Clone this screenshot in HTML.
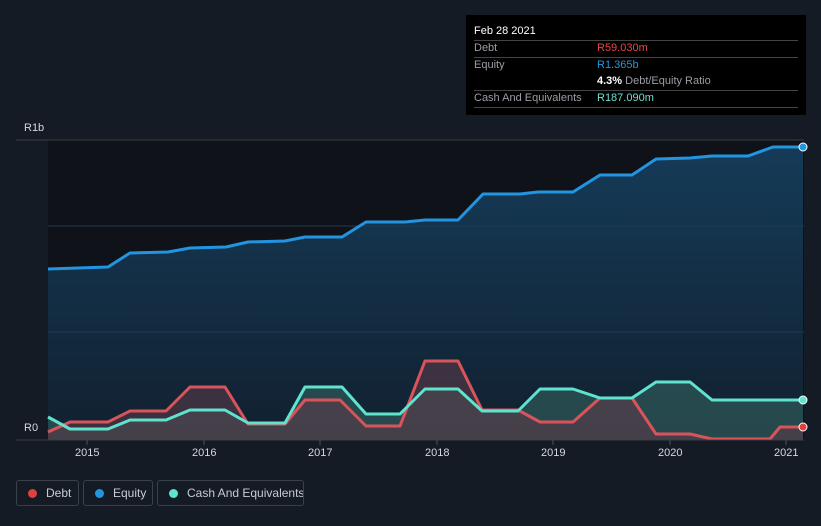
<!DOCTYPE html><html><head><style>
body{margin:0;width:821px;height:526px;background:#151b24;font-family:"Liberation Sans",sans-serif;overflow:hidden;position:relative}
.tt{position:absolute;left:466px;top:15px;width:340px;height:100px;background:#000;color:#fff;font-size:11px}
.tt .r{position:absolute;left:8px;right:8px;border-top:1px solid #444}
.lg{position:absolute;top:480px;height:26px;border:1px solid #3a404a;border-radius:3px;color:#c8ccd2;font-size:12px;line-height:24px;box-sizing:border-box;white-space:nowrap;overflow:hidden}
.lg i{display:inline-block;width:9px;height:9px;border-radius:50%;margin:0 9px 0 11px;vertical-align:-1px}
.ax{position:absolute;color:#d5d8dc;font-size:11px}
</style></head><body>
<svg width="821" height="526" style="position:absolute;left:0;top:0">
<defs>
<linearGradient id="eq" x1="0" y1="0" x2="0" y2="1"><stop offset="0" stop-color="#153b58"/><stop offset="1" stop-color="#11202f"/></linearGradient>
</defs>
<rect x="48" y="140" width="756" height="300" fill="#0f1319"/>
<line x1="16" y1="140" x2="804" y2="140" stroke="#3a3f46"/>
<polygon fill="url(#eq)" points="48,440 48,269 108,267 130,253 168,252 190,248 226,247 248,242 285,241 305,237 342,237 366,222 405,222 425,220 458,220 483,194 520,194 538,192 573,192 600,175 632,175 656,159 690,158 712,156 748,156 773,147 803,147 803,440"/>
<line x1="48" y1="226" x2="804" y2="226" stroke="#25384a"/>
<line x1="48" y1="332" x2="804" y2="332" stroke="#25384a"/>
<polygon fill="#2f5a5a" opacity="0.7" points="48,440 48,417 70,429 108,429 130,420 166,420 190,410 225,410 248,423 285,423 305,387 342,387 366,414 400,414 425,389 458,389 482,411 518,411 540,389 573,389 600,398 632,398 656,382 690,382 712,400 803,400 803,440"/>
<polygon fill="#5a3a48" opacity="0.6" points="48,440 48,432 70,422 108,422 130,411 166,411 190,387 225,387 248,424 285,424 305,400 340,400 366,426 400,426 425,361 458,361 482,410 518,410 540,422 573,422 600,398 632,398 656,434 690,434 712,439 770,439 780,427 803,427 803,440"/>
<polyline fill="none" stroke="#2394e0" stroke-width="3" stroke-linejoin="round" points="48,269 108,267 130,253 168,252 190,248 226,247 248,242 285,241 305,237 342,237 366,222 405,222 425,220 458,220 483,194 520,194 538,192 573,192 600,175 632,175 656,159 690,158 712,156 748,156 773,147 803,147"/>
<polyline fill="none" stroke="#d9545a" stroke-width="3" stroke-linejoin="round" points="48,432 70,422 108,422 130,411 166,411 190,387 225,387 248,424 285,424 305,400 340,400 366,426 400,426 425,361 458,361 482,410 518,410 540,422 573,422 600,398 632,398 656,434 690,434 712,439 770,439 780,427 803,427"/>
<polyline fill="none" stroke="#5fe3cf" stroke-width="3" stroke-linejoin="round" points="48,417 70,429 108,429 130,420 166,420 190,410 225,410 248,423 285,423 305,387 342,387 366,414 400,414 425,389 458,389 482,411 518,411 540,389 573,389 600,398 632,398 656,382 690,382 712,400 803,400"/>
<line x1="16" y1="440" x2="804" y2="440" stroke="#3a3f46"/>
<g stroke="#4a5058"><line x1="87" y1="440" x2="87" y2="445"/><line x1="204" y1="440" x2="204" y2="445"/><line x1="320" y1="440" x2="320" y2="445"/><line x1="437" y1="440" x2="437" y2="445"/><line x1="553" y1="440" x2="553" y2="445"/><line x1="670" y1="440" x2="670" y2="445"/><line x1="786" y1="440" x2="786" y2="445"/></g>
<circle cx="803" cy="147" r="4" fill="#2394e0" stroke="#fff" stroke-width="1"/>
<circle cx="803" cy="400" r="4" fill="#5fe3cf" stroke="#fff" stroke-width="1"/>
<circle cx="803" cy="427" r="4" fill="#e04040" stroke="#fff" stroke-width="1"/>
</svg>
<div class="ax" style="left:24px;top:122px">R1b</div>
<div class="ax" style="left:24px;top:422px">R0</div>
<div class="ax" style="left:75px;top:447px">2015</div>
<div class="ax" style="left:192px;top:447px">2016</div>
<div class="ax" style="left:308px;top:447px">2017</div>
<div class="ax" style="left:425px;top:447px">2018</div>
<div class="ax" style="left:541px;top:447px">2019</div>
<div class="ax" style="left:658px;top:447px">2020</div>
<div class="ax" style="left:774px;top:447px">2021</div>
<div class="tt">
<div style="position:absolute;left:8px;top:10px">Feb 28 2021</div>
<div class="r" style="top:25px"></div>
<div style="position:absolute;left:8px;top:27px;color:#9a9ea4">Debt</div><div style="position:absolute;left:131px;top:27px;color:#e8454b">R59.030m</div>
<div class="r" style="top:42px"></div>
<div style="position:absolute;left:8px;top:44px;color:#9a9ea4">Equity</div><div style="position:absolute;left:131px;top:44px;color:#2394e0">R1.365b</div>
<div style="position:absolute;left:131px;top:60px"><b>4.3%</b> <span style="color:#9a9ea4">Debt/Equity Ratio</span></div>
<div class="r" style="top:75px"></div>
<div style="position:absolute;left:8px;top:77px;color:#9a9ea4">Cash And Equivalents</div><div style="position:absolute;left:131px;top:77px;color:#6ee0cf">R187.090m</div>
<div class="r" style="top:92px"></div>
</div>
<div class="lg" style="left:16px;width:63px"><i style="background:#e04040"></i>Debt</div>
<div class="lg" style="left:83px;width:70px"><i style="background:#2394e0"></i>Equity</div>
<div class="lg" style="left:157px;width:147px"><i style="background:#5fe3cf"></i>Cash And Equivalents</div>
</body></html>
